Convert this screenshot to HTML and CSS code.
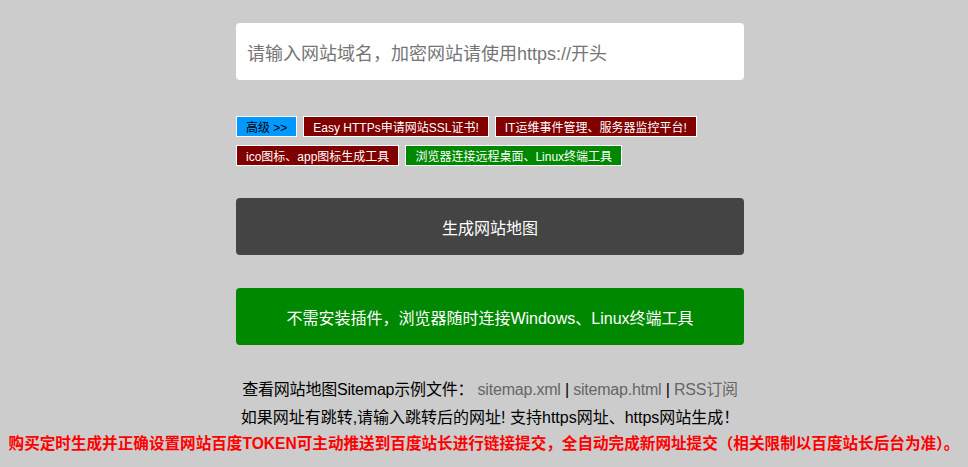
FILE: index.html
```html
<!DOCTYPE html>
<html lang="zh-CN">
<head>
<meta charset="utf-8">
<title>生成网站地图</title>
<link rel="stylesheet" href="styles.css">
</head>
<body>
<div class="wrap">
  <div class="input-box"><span class="placeholder">请输入网站域名，加密网站请使用https://开头</span></div>
  <div class="tags">
    <span class="tag tag-blue">高级 &gt;&gt;</span>
    <span class="tag tag-red">Easy HTTPs申请网站SSL证书!</span>
    <span class="tag tag-red">IT运维事件管理、服务器监控平台!</span>
    <span class="tag tag-red">ico图标、app图标生成工具</span>
    <span class="tag tag-green">浏览器连接远程桌面、Linux终端工具</span>
  </div>
  <div class="btn btn-dark">生成网站地图</div>
  <div class="btn btn-green">不需安装插件，浏览器随时连接Windows、Linux终端工具</div>
  <div class="info">
    <p class="line1">查看网站地图Sitemap示例文件： <a class="lnk">sitemap.xml</a> | <a class="lnk">sitemap.html</a> | <a class="lnk">RSS订阅</a></p>
    <p class="line2">如果网址有跳转,请输入跳转后的网址! 支持https网址、https网站生成！</p>
  </div>
</div>
<p class="line3">购买定时生成并正确设置网站百度TOKEN可主动推送到百度站长进行链接提交，全自动完成新网址提交（相关限制以百度站长后台为准）。</p>
</body>
</html>
```
FILE: styles.css
```css
html, body {
  margin: 0;
  padding: 0;
  background: #cccccc;
  font-family: "Liberation Sans", "Noto Sans CJK SC", sans-serif;
}
.wrap {
  width: 508px;
  margin: 0 auto;
  padding-top: 23px;
  padding-left: 12px;
}
.input-box {
  height: 57px;
  background: #fff;
  border-radius: 4px;
  display: flex;
  align-items: center;
  padding-left: 11px;
  box-sizing: border-box;
}
.placeholder {
  font-size: 18px;
  color: #757575;
}
.tags {
  margin-top: 36px;
  display: flex;
  flex-wrap: wrap;
  gap: 8px 6px;
}
.tag {
  display: inline-flex;
  align-items: center;
  height: 21px;
  box-sizing: border-box;
  border: 1px solid #fff;
  padding: 0 9px;
  font-size: 12px;
  color: #fff;
  white-space: nowrap;
}
.tag-blue { background: #0099ff; color: #000; }
.tag-red { background: #800000; }
.tag-green { background: #008800; }
.btn {
  height: 57px;
  border-radius: 4px;
  display: flex;
  align-items: center;
  justify-content: center;
  color: #fff;
  font-size: 16px;
}
.btn-dark {
  margin-top: 32px;
  background: #444444;
}
.btn-green {
  margin-top: 33px;
  background: #008800;
}
.info {
  margin-top: 31px;
  text-align: center;
}
.info p {
  margin: 0;
  line-height: 28px;
  font-size: 16px;
  color: #000;
  white-space: nowrap;
}
.line1 { letter-spacing: -0.2px; }
.lnk {
  color: #666;
}
.line3 {
  margin: 0;
  line-height: 24px;
  text-align: center;
  font-size: 15.6px;
  font-weight: bold;
  color: #ff0000;
  white-space: nowrap;
}
```
